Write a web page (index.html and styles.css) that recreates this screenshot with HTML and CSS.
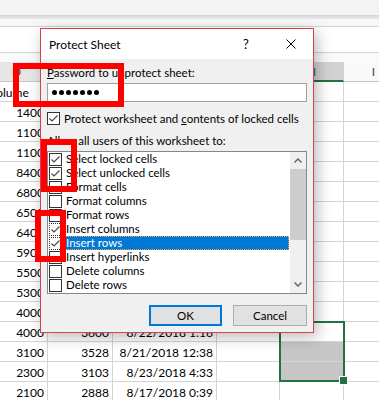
FILE: index.html
```html
<!DOCTYPE html>
<html lang="en">
<head>
    <meta charset="UTF-8">
    <meta name="viewport" content="width=device-width, initial-scale=1.0">
    <title>Protect Sheet</title>
    <link rel="stylesheet" href="styles.css">
</head>
<body>
    <!-- excel window behind the dialog -->
    <div class="ribbon"></div>
    <div class="ribbon-edge"></div>
    <div class="name-strip"></div>
    <div class="formula-bar"></div>
    <div class="sheet-gap"></div>

    <div class="sheet">
        <div class="row heads">
            <div class="cell">D</div><div class="cell">E</div><div class="cell">F</div><div class="cell">G</div><div class="cell on">H</div><div class="cell light">I</div>
        </div>
        <div class="row"><div class="cell text">Volume</div><div class="cell text">Shares</div><div class="cell text">Date</div><div class="cell"></div><div class="cell"></div><div class="cell"></div></div>
        <div class="row"><div class="cell">1400</div><div class="cell"></div><div class="cell"></div><div class="cell"></div><div class="cell"></div><div class="cell"></div></div>
        <div class="row"><div class="cell">1100</div><div class="cell"></div><div class="cell"></div><div class="cell"></div><div class="cell"></div><div class="cell"></div></div>
        <div class="row"><div class="cell">1100</div><div class="cell"></div><div class="cell"></div><div class="cell"></div><div class="cell"></div><div class="cell"></div></div>
        <div class="row"><div class="cell">8400</div><div class="cell"></div><div class="cell"></div><div class="cell"></div><div class="cell"></div><div class="cell"></div></div>
        <div class="row"><div class="cell">6800</div><div class="cell"></div><div class="cell"></div><div class="cell"></div><div class="cell"></div><div class="cell"></div></div>
        <div class="row"><div class="cell">6500</div><div class="cell"></div><div class="cell"></div><div class="cell"></div><div class="cell"></div><div class="cell"></div></div>
        <div class="row"><div class="cell">6400</div><div class="cell"></div><div class="cell"></div><div class="cell"></div><div class="cell"></div><div class="cell"></div></div>
        <div class="row"><div class="cell">5900</div><div class="cell"></div><div class="cell"></div><div class="cell"></div><div class="cell"></div><div class="cell"></div></div>
        <div class="row"><div class="cell">5500</div><div class="cell"></div><div class="cell"></div><div class="cell"></div><div class="cell"></div><div class="cell"></div></div>
        <div class="row"><div class="cell">5300</div><div class="cell"></div><div class="cell"></div><div class="cell"></div><div class="cell"></div><div class="cell"></div></div>
        <div class="row"><div class="cell">4000</div><div class="cell"></div><div class="cell"></div><div class="cell"></div><div class="cell"></div><div class="cell"></div></div>
        <div class="row"><div class="cell">4000</div><div class="cell">3600</div><div class="cell">8/22/2018 1:16</div><div class="cell"></div><div class="cell"></div><div class="cell"></div></div>
        <div class="row"><div class="cell">3100</div><div class="cell">3528</div><div class="cell">8/21/2018 12:38</div><div class="cell"></div><div class="cell fill"></div><div class="cell"></div></div>
        <div class="row"><div class="cell">2300</div><div class="cell">3103</div><div class="cell">8/23/2018 4:33</div><div class="cell"></div><div class="cell fill"></div><div class="cell"></div></div>
        <div class="row"><div class="cell">2100</div><div class="cell">2888</div><div class="cell">8/17/2018 0:39</div><div class="cell"></div><div class="cell"></div><div class="cell"></div></div>
    </div>

    <div class="selection"></div>

    <!-- protect sheet dialog -->
    <div class="dialog">
        <div class="titlebar">
            <span class="title">Protect Sheet</span>
            <span class="help">?</span>
            <svg class="close" width="10" height="10" viewBox="0 0 10 10">
                <path d="M0.5 0.5L9.5 9.5M9.5 0.5L0.5 9.5" stroke="#000" stroke-width="1" fill="none"/>
            </svg>
        </div>
        <div class="dialog-body">
            <div class="field-label"><u>P</u>assword to unprotect sheet:</div>
            <div class="password">
                <span class="dot"></span><span class="dot"></span><span class="dot"></span><span class="dot"></span><span class="dot"></span><span class="dot"></span><span class="dot"></span>
            </div>
            <div class="check-row">
                <span class="box"><svg width="11" height="11" viewBox="0 0 11 11"><polyline points="1.5,5.5 4,8 9.5,2.5" /></svg></span>
                <span>Protect worksheet and <u>c</u>ontents of locked cells</span>
            </div>
            <div class="section-label">Allow all users of this worksheet to:</div>
            <div class="list">
                <div class="items">
                    <div class="item"><span class="box"><svg width="11" height="11" viewBox="0 0 11 11"><polyline points="1.5,5.5 4,8 9.5,2.5" /></svg></span><span class="item-text">Select locked cells</span></div>
                    <div class="item"><span class="box"><svg width="11" height="11" viewBox="0 0 11 11"><polyline points="1.5,5.5 4,8 9.5,2.5" /></svg></span><span class="item-text">Select unlocked cells</span></div>
                    <div class="item"><span class="box"></span><span class="item-text">Format cells</span></div>
                    <div class="item"><span class="box"></span><span class="item-text">Format columns</span></div>
                    <div class="item"><span class="box"></span><span class="item-text">Format rows</span></div>
                    <div class="item"><span class="box dotted"><svg width="11" height="11" viewBox="0 0 11 11"><polyline points="1.5,5.5 4,8 9.5,2.5" /></svg></span><span class="item-text">Insert columns</span></div>
                    <div class="item"><span class="box dotted"><svg width="11" height="11" viewBox="0 0 11 11"><polyline points="1.5,5.5 4,8 9.5,2.5" /></svg></span><span class="item-text selected">Insert rows</span></div>
                    <div class="item"><span class="box"></span><span class="item-text">Insert hyperlinks</span></div>
                    <div class="item"><span class="box"></span><span class="item-text">Delete columns</span></div>
                    <div class="item"><span class="box"></span><span class="item-text">Delete rows</span></div>
                </div>
                <div class="scrollbar">
                    <div class="scroll-btn"><svg width="8" height="5" viewBox="0 0 8 5"><polyline points="0.5,4.5 4,1 7.5,4.5" /></svg></div>
                    <div class="thumb"></div>
                    <div class="track"></div>
                    <div class="scroll-btn"><svg width="8" height="5" viewBox="0 0 8 5"><polyline points="0.5,0.5 4,4 7.5,0.5" /></svg></div>
                </div>
            </div>
            <div class="buttons">
                <div class="btn btn-ok">OK</div>
                <div class="btn btn-cancel">Cancel</div>
            </div>
        </div>
    </div>

    <!-- red annotation boxes -->
    <div class="mark mark-password"></div>
    <div class="mark mark-select"></div>
    <div class="mark mark-insert"></div>
</body>
</html>
```

FILE: styles.css
```css
*{
    box-sizing: border-box;
}
body{
    margin: 0;
    width: 379px;
    height: 400px;
    overflow: hidden;
    position: relative;
    background: #fff;
    font-family: Lato, "Liberation Sans", sans-serif;
    font-size: 12px;
    color: #000;
}

/* excel chrome */
.ribbon{
    height: 15px;
    background: #f3f3f3;
}
.ribbon-edge{
    height: 4px;
    background: linear-gradient(#d4d4d4, #ebebeb);
}
.name-strip{
    height: 8px;
    background: #f7f7f7;
    border-bottom: 1px solid #d4d4d4;
}
.formula-bar{
    height: 26px;
    background: #fff;
    border-bottom: 1px solid #d4d4d4;
}
.sheet-gap{
    height: 9px;
    background: #fafafa;
}

/* grid */
.sheet{
    margin-left: -14px;
}
.row{
    display: grid;
    grid-template-columns: 62px 65px 104px 63px 64px 60px;
    height: 20px;
}
.cell{
    border-right: 1px solid #d4d4d4;
    border-bottom: 1px solid #d4d4d4;
    text-align: right;
    padding: 2px 3px 0 0;
    line-height: 17px;
    white-space: nowrap;
    overflow: hidden;
}
.cell.text{
    text-align: left;
    padding-left: 3px;
}
.cell.fill{
    background: #c6c6c6;
}
.heads .cell{
    text-align: center;
    padding: 1px 0 0;
    background: #e6e6e6;
    color: #444;
    border-bottom-color: #c8c8c8;
}
.heads .cell.on{
    background: #d2d2d2;
    color: #217346;
    border-bottom: 2px solid #217346;
}
.heads .cell.light{
    background: #f8f8f8;
}
.selection{
    position: absolute;
    left: 279px;
    top: 321px;
    width: 66px;
    height: 61px;
    border: 2px solid #217346;
}
.selection::after{
    content: "";
    position: absolute;
    right: -5px;
    bottom: -5px;
    width: 7px;
    height: 7px;
    background: #217346;
    border: 1px solid #fff;
}

/* dialog */
.dialog{
    position: absolute;
    left: 40px;
    top: 28px;
    width: 274px;
    height: 305px;
    border: 1px solid #d6404f;
    background: #f0f0f0;
    box-shadow: 3px 4px 14px rgba(0, 0, 0, 0.28);
}
.titlebar{
    display: flex;
    align-items: center;
    height: 30px;
    background: #fff;
}
.title{
    flex: 1;
    padding-left: 8px;
}
.help{
    width: 14px;
    text-align: center;
    margin-right: 33px;
    font-size: 13px;
}
.close{
    margin-right: 17px;
}
.dialog-body{
    padding: 7px 6px 0;
    font-size: 11.5px;
    white-space: nowrap;
}
.field-label{
    line-height: 14px;
}
.password{
    margin-top: 3px;
    height: 19px;
    border: 1px solid #a0a0a0;
    background: #fff;
    display: flex;
    align-items: center;
    gap: 2px;
    padding-left: 4px;
}
.dot{
    width: 5px;
    height: 5px;
    border-radius: 50%;
    background: #000;
}
.check-row{
    display: flex;
    align-items: center;
    height: 14px;
    margin-top: 9px;
}
.check-row .box{
    margin-right: 4px;
}
.section-label{
    margin-top: 9px;
    line-height: 14px;
}
.box{
    width: 13px;
    height: 13px;
    flex: none;
    border: 1px solid #333;
    background: #fff;
    display: flex;
    align-items: center;
    justify-content: center;
}
.box.dotted{
    border-style: dotted;
}
.box polyline{
    fill: none;
    stroke: #444;
    stroke-width: 1.1;
}
.list{
    margin-top: 3px;
    height: 143px;
    border: 1px solid #828790;
    background: #fff;
    display: flex;
}
.items{
    flex: 1;
}
.item{
    display: flex;
    align-items: center;
    height: 14px;
}
.item .box{
    margin-left: 1px;
}
.item-text{
    flex: 1;
    margin: 0 1px;
    padding-left: 3px;
    line-height: 14px;
}
.item-text.selected{
    background: #0078d7;
    color: #fff;
    outline: 1px dotted #f2a33a;
    outline-offset: -1px;
}
.scrollbar{
    width: 16px;
    background: #f0f0f0;
    display: flex;
    flex-direction: column;
}
.scroll-btn{
    height: 17px;
    display: flex;
    align-items: center;
    justify-content: center;
}
.scroll-btn polyline{
    fill: none;
    stroke: #606060;
    stroke-width: 1.4;
}
.thumb{
    height: 71px;
    background: #cdcdcd;
}
.track{
    flex: 1;
}
.buttons{
    display: flex;
    justify-content: flex-end;
    gap: 11px;
    margin-top: 11px;
}
.btn{
    height: 21px;
    background: #e1e1e1;
    border: 1px solid #adadad;
    display: flex;
    align-items: center;
    justify-content: center;
}
.btn-ok{
    width: 73px;
    border: 2px solid #0078d7;
}
.btn-cancel{
    width: 74px;
}

/* red annotation boxes */
.mark{
    position: absolute;
    border: 6px solid #ff0000;
}
.mark-password{
    left: 13px;
    top: 63px;
    width: 111px;
    height: 44px;
}
.mark-select{
    left: 41px;
    top: 139px;
    width: 36px;
    height: 53px;
}
.mark-insert{
    left: 35px;
    top: 210px;
    width: 31px;
    height: 52px;
}
```
